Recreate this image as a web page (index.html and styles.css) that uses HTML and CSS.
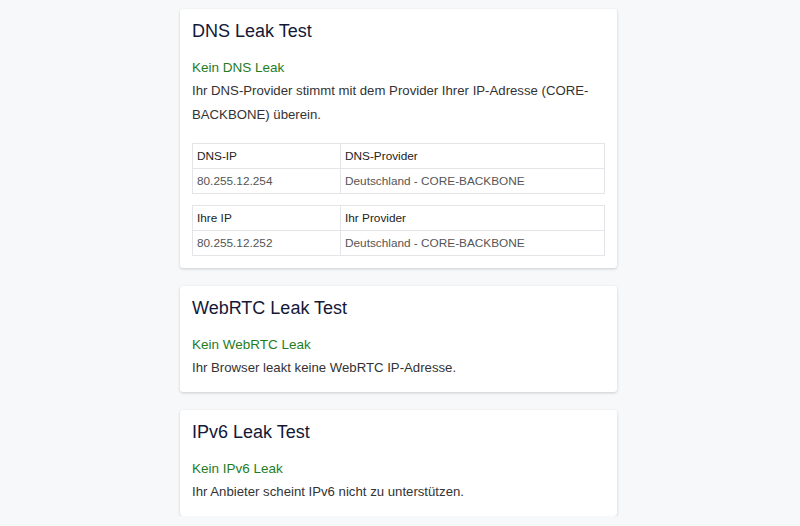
FILE: index.html
```html
<!DOCTYPE html>
<html lang="de">
<head>
  <meta charset="UTF-8">
  <meta name="viewport" content="width=device-width, initial-scale=1.0">
  <title>Leak Test</title>
  <link rel="stylesheet" href="styles.css">
</head>
<body>
  <main class="page">
    <section class="card">
      <h2 class="card-title">DNS Leak Test</h2>
      <p class="status">Kein DNS Leak</p>
      <p class="text">Ihr DNS-Provider stimmt mit dem Provider Ihrer IP-Adresse (CORE-BACKBONE) überein.</p>
      <table class="info">
        <tr><td>DNS-IP</td><td>DNS-Provider</td></tr>
        <tr class="muted"><td>80.255.12.254</td><td>Deutschland - CORE-BACKBONE</td></tr>
      </table>
      <table class="info">
        <tr><td>Ihre IP</td><td>Ihr Provider</td></tr>
        <tr class="muted"><td>80.255.12.252</td><td>Deutschland - CORE-BACKBONE</td></tr>
      </table>
    </section>

    <section class="card">
      <h2 class="card-title">WebRTC Leak Test</h2>
      <p class="status">Kein WebRTC Leak</p>
      <p class="text">Ihr Browser leakt keine WebRTC IP-Adresse.</p>
    </section>

    <section class="card">
      <h2 class="card-title">IPv6 Leak Test</h2>
      <p class="status">Kein IPv6 Leak</p>
      <p class="text">Ihr Anbieter scheint IPv6 nicht zu unterstützen.</p>
    </section>
  </main>
</body>
</html>
```

FILE: styles.css
```css
html {
  font-family: "Liberation Sans", Arial, sans-serif;
}

body {
  background-color: #f7f8fa;
  margin: 0;
}

.page {
  display: flex;
  flex-direction: column;
  gap: 18px;
  margin-left: calc(50% - 220px);
  padding-top: 9px;
  width: 437px;
}

.card {
  background-color: #fff;
  border-radius: 3px;
  box-shadow: 0 1px 3px rgba(0, 0, 0, 0.18);
  padding: 10px 12px 12px;
}

.card-title {
  color: #141838;
  font-size: 18px;
  font-weight: normal;
  line-height: 24px;
  margin: 0 0 14px;
}

.status {
  color: #1f7d1f;
  font-size: 13.5px;
  line-height: 22px;
  margin: 0;
}

.text {
  color: #333;
  font-size: 13.2px;
  line-height: 24px;
  margin: 0;
}

.info {
  border-collapse: collapse;
  font-size: 11.8px;
  margin-top: 11px;
  width: 100%;
}

.text + .info {
  margin-top: 16px;
}

.info td {
  border: 1px solid #e3e5e8;
  color: #222;
  height: 24px;
  line-height: 16px;
  padding: 0 4px;
}

.info td:first-child {
  width: 139px;
}

.info .muted td {
  color: #555;
}
```
